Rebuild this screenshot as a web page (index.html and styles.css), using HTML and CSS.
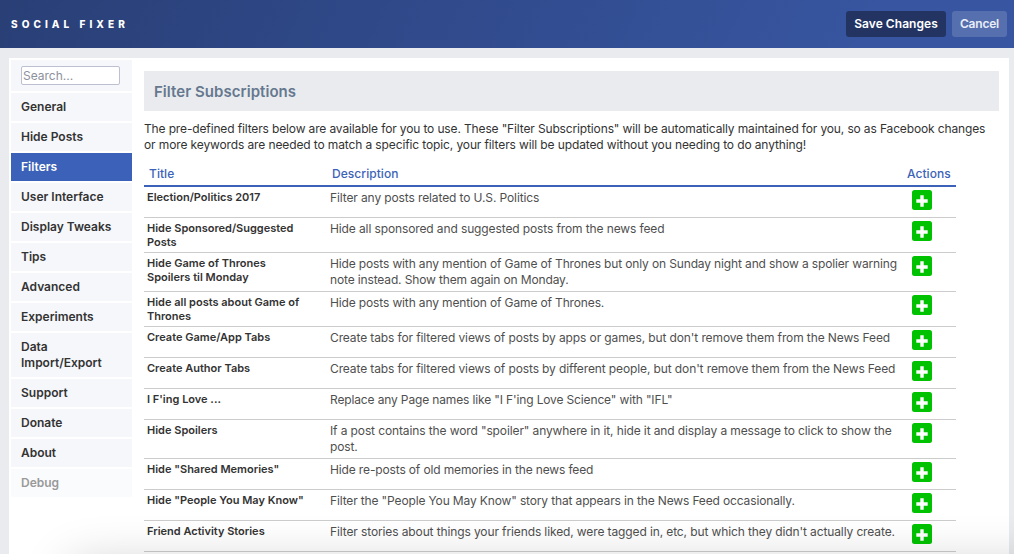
FILE: index.html
```html
<!DOCTYPE html>
<html lang="en">
<head>
<meta charset="utf-8">
<title>Social Fixer</title>
<link rel="stylesheet" href="styles.css">
</head>
<body>
<svg class="defs" width="0" height="0"><symbol id="plus" viewBox="0 0 20 20"><rect width="20" height="20" rx="2.5" fill="#00c200"/><path d="M10 5.3V16.700M4.300 11H15.700" stroke="#fff" stroke-width="3.400" stroke-linecap="butt"/></symbol></svg>
<header class="topbar">
  <div class="brand">SOCIAL FIXER</div>
  <div class="buttons"><button class="btn save">Save Changes</button><button class="btn cancel">Cancel</button></div>
</header>
<main class="panel">
  <nav class="menu">
    <div class="search"><input class="search-input" type="text" placeholder="Search..."></div>
    <a class="item">General</a>
    <a class="item">Hide Posts</a>
    <a class="item active">Filters</a>
    <a class="item">User Interface</a>
    <a class="item">Display Tweaks</a>
    <a class="item">Tips</a>
    <a class="item">Advanced</a>
    <a class="item">Experiments</a>
    <a class="item">Data<br>Import/Export</a>
    <a class="item">Support</a>
    <a class="item">Donate</a>
    <a class="item">About</a>
    <a class="item faded">Debug</a>
  </nav>
  <section class="content">
    <h1 class="heading">Filter Subscriptions</h1>
    <p class="intro"><span class="tight">The pre-defined filters below are available for you to use. These "Filter Subscriptions" will be automatically maintained for you, so as Facebook changes</span><br>or more keywords are needed to match a specific topic, your filters will be updated without you needing to do anything!</p>
    <div class="table">
      <div class="row head"><div>Title</div><div>Description</div><div>Actions</div></div>
      <div class="row"><div class="title">Election/Politics 2017</div><div class="desc">Filter any posts related to U.S. Politics</div><svg class="add"><use href="#plus"/></svg></div>
      <div class="row"><div class="title">Hide Sponsored/Suggested<br>Posts</div><div class="desc">Hide all sponsored and suggested posts from the news feed</div><svg class="add"><use href="#plus"/></svg></div>
      <div class="row"><div class="title">Hide Game of Thrones<br>Spoilers til Monday</div><div class="desc tight">Hide posts with any mention of Game of Thrones but only on Sunday night and show a spolier warning<br>note instead. Show them again on Monday.</div><svg class="add"><use href="#plus"/></svg></div>
      <div class="row"><div class="title">Hide all posts about Game of<br>Thrones</div><div class="desc tight">Hide posts with any mention of Game of Thrones.</div><svg class="add"><use href="#plus"/></svg></div>
      <div class="row"><div class="title">Create Game/App Tabs</div><div class="desc">Create tabs for filtered views of posts by apps or games, but don't remove them from the News Feed</div><svg class="add"><use href="#plus"/></svg></div>
      <div class="row"><div class="title">Create Author Tabs</div><div class="desc">Create tabs for filtered views of posts by different people, but don't remove them from the News Feed</div><svg class="add"><use href="#plus"/></svg></div>
      <div class="row"><div class="title">I F'ing Love ...</div><div class="desc tight">Replace any Page names like "I F'ing Love Science" with "IFL"</div><svg class="add"><use href="#plus"/></svg></div>
      <div class="row"><div class="title">Hide Spoilers</div><div class="desc">If a post contains the word "spoiler" anywhere in it, hide it and display a message to click to show the<br>post.</div><svg class="add"><use href="#plus"/></svg></div>
      <div class="row"><div class="title">Hide "Shared Memories"</div><div class="desc tight">Hide re-posts of old memories in the news feed</div><svg class="add"><use href="#plus"/></svg></div>
      <div class="row"><div class="title">Hide "People You May Know"</div><div class="desc tight">Filter the "People You May Know" story that appears in the News Feed occasionally.</div><svg class="add"><use href="#plus"/></svg></div>
      <div class="row"><div class="title">Friend Activity Stories</div><div class="desc">Filter stories about things your friends liked, were tagged in, etc, but which they didn't actually create.</div><svg class="add"><use href="#plus"/></svg></div>
    </div>
  </section>
</main>
<div class="overlay"><div class="shade"></div></div>
</body>
</html>
```
FILE: styles.css
```css
* { box-sizing: border-box; }
body {
  margin: 0;
  height: 554px;
  overflow: hidden;
  display: flex;
  flex-direction: column;
  background: #e9ebee;
  font: 12px/16px Inter, "Liberation Sans", sans-serif;
  color: #333;
}
.defs { position: absolute; }
.topbar {
  flex: none;
  height: 48px;
  padding: 0 7px 0 11px;
  display: flex;
  align-items: center;
  justify-content: space-between;
  background: linear-gradient(115deg, #293f76, #3755a0 85%);
}
.brand { color: #fff; font-size: 10px; font-weight: 800; letter-spacing: 4.050px; }
.buttons { display: flex; gap: 6px; }
.btn {
  height: 26px;
  padding: 0;
  border: 0;
  border-radius: 3px;
  color: #fff;
  font: 600 12px/26px Inter, sans-serif;
  letter-spacing: 0.050px;
  white-space: nowrap;
}
.save { width: 100px; background: #233463; }
.cancel { width: 55px; background: #566fae; color: #e8edf8; letter-spacing: -0.200px; }
.panel {
  flex: 1;
  margin: 10px 5px 0 9px;
  padding: 2px 10px 0 2px;
  display: flex;
  gap: 12px;
  min-height: 0;
  overflow: hidden;
  background: #fff;
}
.menu { width: 121px; flex: none; display: flex; flex-direction: column; gap: 2px; }
.search { height: 31px; padding: 6px 10px; background: #f6f7fb; }
.search-input {
  display: block;
  width: 99px;
  height: 19px;
  padding: 0 1px;
  border: 1px solid #bcc0d0;
  border-radius: 2px;
  font: 12px Inter, sans-serif;
}
.search-input::placeholder { color: #8d919c; }
.item { padding: 6px 10px; background: #f6f7fb; font-weight: 600; white-space: nowrap; }
.active { background: #3b62b8; color: #fff; }
.faded { background: #fafbfd; color: #999; }
.content { flex: 1; padding-top: 11px; min-width: 0; }
.heading {
  height: 40px;
  margin: 0;
  padding-left: 10px;
  background: #e9ebee;
  color: #65788f;
  font-size: 15px;
  line-height: 41px;
  font-weight: 600;
  letter-spacing: 0.050px;
}
.intro { margin: 10px 0 9px; white-space: nowrap; letter-spacing: -0.118px; }
.table { width: 812px; }
.row {
  display: grid;
  grid-template-columns: 183px 575px 54px;
  align-items: start;
  min-height: 31px;
  border-bottom: 1px solid #ccc;
  white-space: nowrap;
}
.head {
  min-height: 0;
  height: 25px;
  border-bottom: 2px solid #3b62b8;
  color: #3b62b8;
  font-weight: 500;
  letter-spacing: 0.050px;
}
.head > div { padding: 4px 5px; }
.title { padding: 3px; font-size: 11px; line-height: 14px; font-weight: 600; }
.desc { padding: 3px; color: #4f4f4f; letter-spacing: -0.115px; }
.tight { letter-spacing: -0.140px; }
.add { width: 20px; height: 20px; margin: 3px 0 0 10px; }
/* Soft shadow rising from the bottom edge */
.overlay {
  position: absolute;
  inset: 0;
  overflow: hidden;
  pointer-events: none;
}
.shade {
  height: 80px;
  margin: 564px -60px 0 70px;
  box-shadow: 0 0 50px rgba(0, 0, 0, 0.2);
}
```
